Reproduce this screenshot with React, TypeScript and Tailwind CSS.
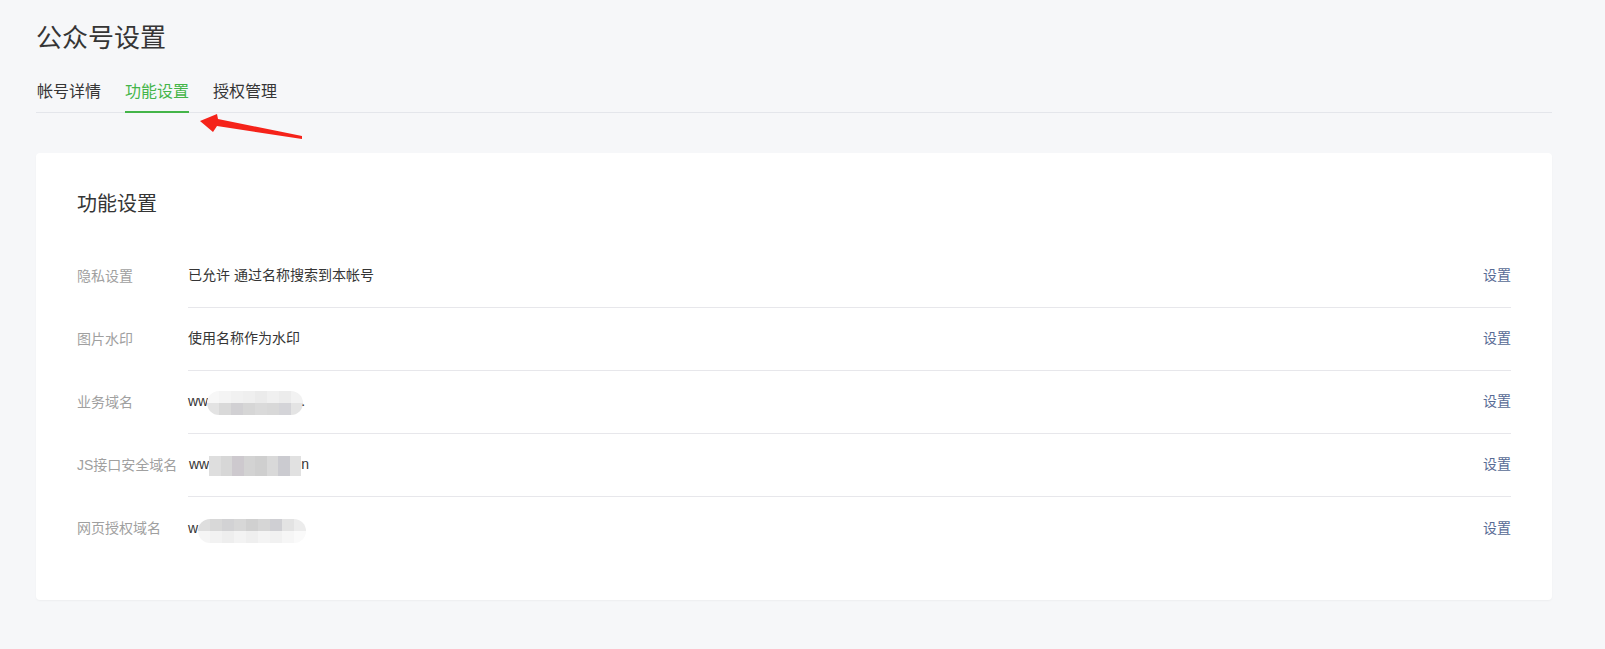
import React from "react";

const font = { fontFamily: '"Liberation Sans", "Noto Sans CJK SC", sans-serif' };

type Cell = string;

// pixelated mosaic used to hide part of a domain
const Mosaic = ({ top, bottom, className }: { top: Cell[]; bottom: Cell[]; className?: string }) => (
  <div className={"flex flex-col overflow-hidden rounded-full " + (className || "")}>
    <div className="flex h-[12px]">
      {top.map((c, i) => (
        <div key={i} className="h-full w-[12px]" style={{ background: c }} />
      ))}
    </div>
    <div className="flex h-[12px]">
      {bottom.map((c, i) => (
        <div key={i} className="h-full w-[12px]" style={{ background: c }} />
      ))}
    </div>
  </div>
);

const rows = [
  { label: "隐私设置", value: <span>已允许 通过名称搜索到本帐号</span> },
  { label: "图片水印", value: <span>使用名称作为水印</span> },
  {
    label: "业务域名",
    value: (
      <div className="flex items-center">
        <span>ww</span>
        <Mosaic
          className="-ml-[1px] mt-[2px]"
          top={["#f7f7f7", "#f4f4f4", "#f1f1f1", "#efefef", "#ebebeb", "#f0f0f0", "#ececec", "#f2f2f2"]}
          bottom={["#e3e3e3", "#d9d9d9", "#d1d0d3", "#d6d6d6", "#dadada", "#d8d8d8", "#d4d4d8", "#e4e4e4"]}
        />
        <span className="-ml-[2px]">.</span>
      </div>
    ),
  },
  {
    label: "JS接口安全域名",
    value: (
      <div className="flex items-center pl-[1px]">
        <span>ww</span>
        <div className="flex h-[20px] mt-[2px]">
          {["#dedede", "#d7d7d7", "#cdc9ce", "#d3d3d3", "#cfcfcf", "#d9d9d9", "#cbcbd0", "#e1e1e1"].map((c, i) => (
            <div key={i} className="h-full w-[11.5px]" style={{ background: c }} />
          ))}
        </div>
        <span>n</span>
      </div>
    ),
  },
  {
    label: "网页授权域名",
    value: (
      <div className="flex items-center">
        <span>w</span>
        <Mosaic
          className="mt-[6px]"
          top={["#dedede", "#d8d8d8", "#d2d2d4", "#d7d7d7", "#d0d0d0", "#d6d6d6", "#cfcfd3", "#e3e3e3", "#ececec"]}
          bottom={["#f5f5f5", "#f2f2f2", "#eeeeee", "#f3f3f3", "#efefef", "#f4f4f4", "#f1f1f1", "#f6f6f6", "#fafafa"]}
        />
      </div>
    ),
  },
];

export default function App() {
  return (
    <div className="relative min-h-screen bg-[#f6f7f9] pl-[36px] pr-[53px] pb-[40px] text-[#353535]" style={font}>
      <h1 className="pt-[20px] text-[26px] leading-[36px] font-normal">公众号设置</h1>

      <div className="mt-[24px] flex gap-[24px] border-b border-[#e4e6eb] pl-[1px] text-[16px] leading-[24px]">
        <div className="pb-[8px]">帐号详情</div>
        <div className="-mb-px border-b-2 border-[#44b549] pb-[7px] text-[#44b549]">功能设置</div>
        <div className="pb-[8px]">授权管理</div>
      </div>

      <div className="mt-[40px] rounded-[4px] bg-white px-[41px] pt-[37px] pb-[40px] shadow-[0_1px_2px_rgba(0,0,0,0.04)]">
        <h2 className="text-[20px] leading-[28px] font-normal">功能设置</h2>
        <div className="mt-[27px] text-[14px]">
          {rows.map((r, i) => (
            <div key={r.label} className="flex h-[63px]">
              <div className="flex w-[111px] shrink-0 items-center pb-[1px] text-[#a0a0a0]">{r.label}</div>
              <div
                className={
                  "flex flex-1 items-center justify-between pb-[1px] " +
                  (i < rows.length - 1 ? "border-b border-[#e7e7eb]" : "")
                }
              >
                {r.value}
                <a className="text-[#576b95] cursor-pointer">设置</a>
              </div>
            </div>
          ))}
        </div>
      </div>

      <svg className="pointer-events-none absolute left-0 top-0" width="320" height="150" viewBox="0 0 320 150">
        <polygon
          points="200,121 217,114 218,119 302,136 302,139 217,126 213,132"
          fill="#f5231a"
        />
      </svg>
    </div>
  );
}
